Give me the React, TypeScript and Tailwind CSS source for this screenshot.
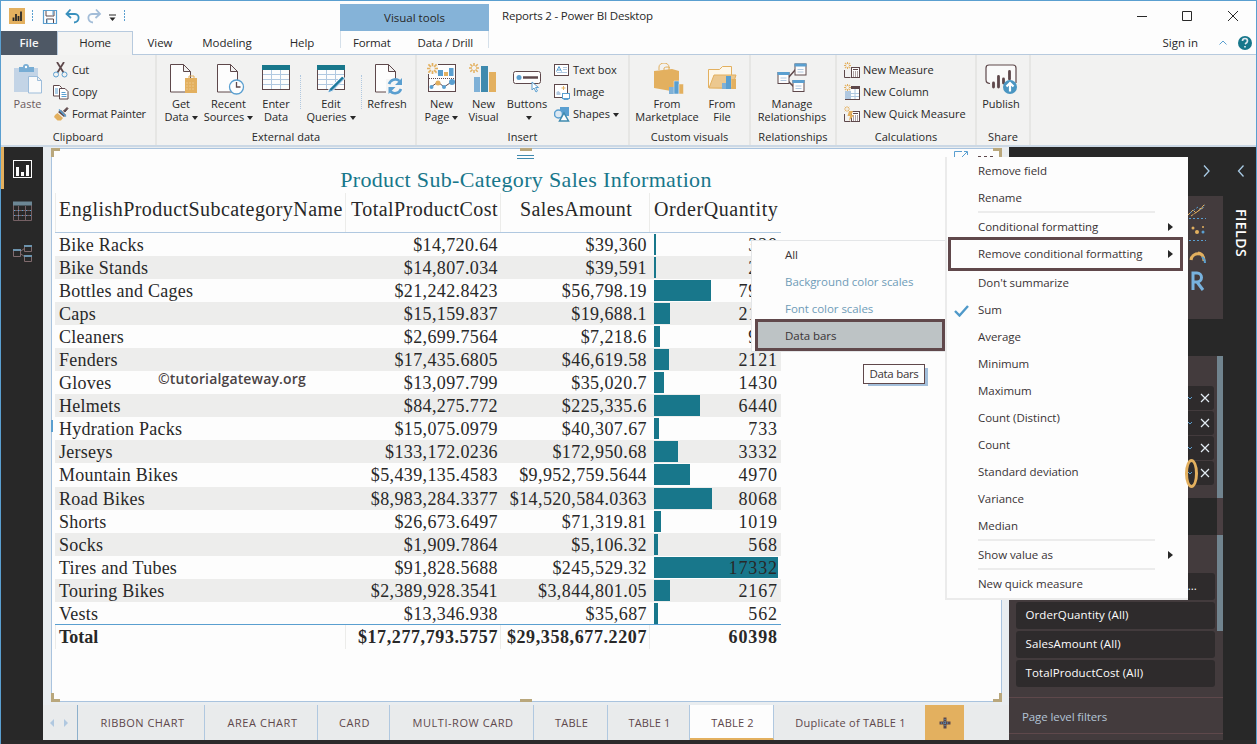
import React from "react";

type Kids = { children?: React.ReactNode };

const B = "#5a9fd0";
const LB = "#b0c8e0";
const G = "#e3b05f";
const D = "#5e484b";
const T = "#18778b";

function Caret() {
  return <span className="ml-[3px] inline-block border-x-[3.5px] border-t-[4px] border-x-transparent border-t-[#282828] align-middle" />;
}

function Big({ icon, a, b, w, caret, dim }: { icon: React.ReactNode; a: string; b?: string; w: string; caret?: boolean; dim?: boolean }) {
  return (
    <div className={`flex flex-col items-center shrink-0 ${w} pt-[8px]`}>
      <svg width="36" height="34" viewBox="0 0 36 34" fill="none" shapeRendering="geometricPrecision">{icon}</svg>
      <div className={`text-center text-[11px] leading-[13px] whitespace-nowrap ${dim ? "text-[#6a5a5c]" : ""}`}>
        <div>{a}</div>
        <div className="h-[13px]">{b}{caret && <Caret />}</div>
      </div>
    </div>
  );
}

function Small({ icon, text, caret }: { icon: React.ReactNode; text: string; caret?: boolean }) {
  return (
    <div className="flex h-[22px] items-center gap-[3px] text-[11px] whitespace-nowrap">
      <svg width="16" height="16" viewBox="0 0 16 16" fill="none">{icon}</svg>
      <span>{text}{caret && <Caret />}</span>
    </div>
  );
}

function Group({ w, label, children }: Kids & { w: string; label: string }) {
  return (
    <div className={`flex shrink-0 flex-col border-r-2 border-[#e6e6e4] ${w}`}>
      <div className="flex h-[74px]">{children}</div>
      <div className="text-center text-[11px] leading-[16px] tracking-[0.05px]">{label}</div>
    </div>
  );
}

function Page() {
  return <path d="M6.500 1.500h13l7 7v20.500h-20zM19.500 1.500v7h7" fill="#fdfdfd" stroke={D} />;
}

function Spark({ x = 0, y = 0, s = 1 }: { x?: number; y?: number; s?: number }) {
  return (
    <g transform={`translate(${x} ${y}) scale(${s})`} stroke={G} strokeWidth="1.5">
      <path d="M5 0v3M5 7v3M0 5h3M7 5h3M1.300 1.300l2.200 2.200M6.500 6.500l2.200 2.200M8.700 1.300L6.500 3.500M3.500 6.500L1.300 8.700" />
    </g>
  );
}

const calc = (
  <>
    <rect x="7.500" y="5.500" width="8" height="10" fill="#fdfdfd" stroke={D} />
    <path d="M9 7.500h5M9 10h1m1 0h1m1 0h1M9 12h1m1 0h1m1 0h1M9 14h1m1 0h1m1 0h1" stroke={D} />
    <path d="M.5 8v7.500h6" stroke={D} />
  </>
);

function Ribbon() {
  return (
    <div className="flex h-[92px] shrink-0 border-b-2 border-[#cbd8e5] bg-[#f2f2f1] text-[#282828]">
      <Group w="w-[156px]" label="Clipboard">
        <Big w="w-[53px]" a="Paste" dim icon={<>
          <path d="M4 5h24v24H4z" fill="#c3d4e6" /><path d="M9 4h4a3 3 0 0 1 6 0h5v5H9z" fill="#78add4" /><circle cx="16" cy="4" r="1.200" fill="#fff" />
          <path d="M18.500 13.500h9l4 4v12.500h-13zM27.500 13.500v4h4" fill="#fafafa" stroke="#9dbddb" />
        </>} />
        <div className="-ml-px flex flex-col pt-1 tracking-[-0.2px]">
          <Small text="Cut" icon={<>
            <path d="M4 0l6.500 10.500M11 0L4.500 10.500" stroke={D} strokeWidth="1.800" /><circle cx="3" cy="12.500" r="2.500" stroke={B} /><circle cx="11.500" cy="12.500" r="2.500" stroke={B} />
          </>} />
          <Small text="Copy" icon={<>
            <path d="M.5 1.500h6l2 2v8.500h-8z" fill="#fff" stroke={D} /><path d="M6.500 4.500h5.500l3 3v7.500h-8.500z" fill="#fff" stroke={D} /><path d="M2 5h3M2 7h3M2 9h3M8.500 8.500h4M8.500 10.500h5M8.500 12.500h5" stroke={B} />
          </>} />
          <Small text="Format Painter" icon={<>
            <path d="M10.500 5L14 1.500l1 1L12 6z" fill={D} stroke={D} /><path d="M5 6l3-2 5 5-2 2z" fill={D} /><path d="M6 3.500l7 7" stroke={B} strokeWidth="1.500" /><path d="M4.500 7l5.500 5-2 2.500H4.500L1 11l1-2z" fill={G} />
          </>} />
        </div>
      </Group>
      <Group w="w-[260px]" label="External data">
        <Big w="w-[48px]" a="Get" b="Data" caret icon={<g transform="translate(1 0)"><Page /><rect x="21" y="15" width="12" height="15" fill={G} /><path d="M25 15v-2h5v2M21 17.500h12" stroke={G} /><path d="M22.500 20h9M22.500 23h9M22.500 26h9" stroke="#f5ddb5" strokeDasharray="1 2" /></g>} />
        <Big w="w-[47px]" a="Recent" b="Sources" caret icon={<><Page /><circle cx="25.500" cy="24" r="7" fill="#fdfdfd" stroke={B} strokeWidth="1.300" /><path d="M25.500 19v5h4" stroke={D} strokeWidth="1.300" /></>} />
        <Big w="w-[48px]" a="Enter" b="Data" icon={<>
          <rect x="4.500" y="2.500" width="27" height="24" fill="#fdfdfd" stroke={D} /><rect x="4" y="2" width="28" height="5" fill={T} /><path d="M5 11.500h26M5 16.500h26M5 21.500h26M13.500 7v19M22.500 7v19" stroke={LB} />
        </>} />
        <div className="my-5 border-l border-dotted border-[#b0c8e0]" />
        <Big w="w-[60px]" a="Edit" b="Queries" caret icon={<>
          <rect x="4.500" y="2.500" width="27" height="24" fill="#fdfdfd" stroke={D} /><rect x="4" y="2" width="28" height="5" fill={T} /><path d="M5 11.500h26M5 16.500h26M5 21.500h26M13.500 7v19M22.500 7v19" stroke={LB} />
          <path d="M16 26L29 13l3 2.500L19 28.500l-4.500 1.500z" fill={B} stroke="#f5f5f5" /><path d="M17.500 27L30 14.500" stroke={T} strokeWidth="1.500" />
        </>} />
        <div className="my-5 border-l border-dotted border-[#b0c8e0]" />
        <Big w="w-[50px]" a="Refresh" icon={<><Page /><path d="M17 16h17v14H17z" fill="#f5f5f5" /><path d="M20 21a6.500 6.500 0 0 1 10.500-3M32 26a6.500 6.500 0 0 1-10.500 2.500" stroke={B} strokeWidth="2.600" /><path d="M33 15v7h-7zM19.500 31v-7h7z" fill={B} /></>} />
      </Group>
      <Group w="w-[213px]" label="Insert">
        <Big w="w-[49px]" a="New" b="Page" caret icon={<>
          <rect x="4.500" y="1.500" width="27" height="27" fill="#fdfdfd" stroke={D} /><path d="M5 15.500h26" stroke={D} strokeDasharray="1 1" /><path d="M14 7h5v6h-5zM25 5h4.500v8H25z" fill={B} /><path d="M20 9h4v4h-4z" fill={G} />
          <path d="M7 24l7-5 6 5 9-6" stroke={D} /><circle cx="7.500" cy="24" r="2" fill={B} /><circle cx="14" cy="20" r="2.500" fill={G} /><circle cx="20" cy="24" r="2" fill={B} /><circle cx="28" cy="19" r="3" fill={B} />
          <path d="M3 0h11v11H3z" fill="#f2f2f1" /><Spark x={3} y={0} s={1.100} />
        </>} />
        <Big w="w-[35px]" a="New" b="Visual" icon={<><Spark x={3} y={0} /><path d="M8 14h6v15H8z" fill="#7fb1d7" /><path d="M15 3h7v26h-7z" fill="#3f8aae" /><path d="M23 9h7v20h-7z" fill={G} /></>} />
        <Big w="w-[52px]" a="Buttons" caret icon={<><rect x="4.500" y="8.500" width="27" height="12" rx="2" fill="#fdfdfd" stroke={D} /><circle cx="10" cy="14.500" r="2.500" fill={B} /><path d="M14 14.500h15" stroke={D} strokeWidth="2.500" /><path d="M23 19v8l2-2 2 4 1.500-1-2-3.500h3z" fill="#fff" stroke={B} /></>} />
        <div className="ml-px flex flex-col pt-1">
          <Small text="Text box" icon={<><rect x=".5" y="2.500" width="14" height="11" fill="#fff" stroke={D} /><path d="M2.500 9.500L5 4.500l2.500 5M3.500 8h3" stroke={B} /><path d="M9 5.500h4M9 7.500h4M3 10.500h10" stroke={LB} /></>} />
          <Small text="Image" icon={<><rect x=".5" y=".5" width="13" height="13" fill="#fff" stroke={D} /><path d="M9.500 2v4M7.500 4h4" stroke={G} /><path d="M2.500 11V8l2-1 2 2v2z" fill={LB} /><rect x="8.500" y="9.500" width="7" height="5" fill="#fff" stroke={B} /><path d="M12 14v2M9.500 15.500h5" stroke={B} /></>} />
          <Small text="Shapes" caret icon={<><path d="M6 1h9v9H6z" fill={B} /><circle cx="4.500" cy="8" r="4" stroke={B} strokeWidth="1.500" fill="#dce8f2" /><path d="M10 7l4.500 8h-9z" fill="#fdfdfd" stroke="#3f8aae" strokeWidth="1.500" /></>} />
        </div>
      </Group>
      <Group w="w-[121px]" label="Custom visuals">
        <Big w="w-[74px]" a="From" b="Marketplace" icon={<><path d="M10 7V4a5 4 0 0 1 10 0v3M15 7V5a4 3 0 0 1 6 0" stroke={G} /><path d="M5 8l18-2 7 2v17l-8 3L5 25z" fill={G} /><path d="M20 24h5v7h-5z" fill="#7fb1d7" /><path d="M25 18h5v13h-5z" fill={B} stroke="#f2f2f1" strokeWidth=".5" /><path d="M30 21h4.500v10H30z" fill={G} stroke="#f2f2f1" strokeWidth=".5" /></>} />
        <Big w="w-[36px]" a="From" b="File" icon={<><path d="M4.500 24.500v-18h11l3-3h9v22z" fill="#fdf7ea" stroke={G} /><path d="M10 12h22l-4 13H5z" fill="#ecc88f" stroke={G} /><path d="M18 20h4v6h-4z" fill="#7fb1d7" /><path d="M22 13h5v13h-5z" fill={B} /><path d="M27.500 16H32v10h-4.500z" fill={G} /></>} />
      </Group>
      <Group w="w-[86px]" label="Relationships">
        <Big w="w-[82px]" a="Manage" b="Relationships" icon={<>
          <path d="M14 15L22 6M14 18l6 6" stroke={D} strokeWidth="1.500" />
          {[[21, 1], [4, 9.500], [19, 17.500]].map(([x, y]) => <g key={x}><rect x={x} y={y} width="11" height="11" fill="#fdfdfd" stroke={D} /><rect x={x - .5} y={y - .5} width="12" height="3" fill={B} /><path d={`M${x + 2.500} ${y + 5.500}h6M${x + 2.500} ${y + 8}h6`} stroke={LB} /></g>)}
        </>} />
      </Group>
      <Group w="w-[140px]" label="Calculations">
        <div className="flex flex-col pt-1 pl-[7px]">
          <Small text="New Measure" icon={<>{calc}<Spark s={.7} /></>} />
          <Small text="New Column" icon={<><rect x="1.500" y="2.500" width="14" height="13" fill="#fff" stroke={D} /><path d="M7 2h9v3H7z" fill={D} /><path d="M1 6h5v9H1z" fill={LB} /><path d="M6.500 5v10M11 5v10M2 9.500h13M2 12.500h13" stroke={LB} /><path d="M0 0h7v7H0z" fill="#f2f2f1" /><Spark s={.7} /></>} />
          <Small text="New Quick Measure" icon={<>{calc}<Spark s={.6} /><path d="M5 5h4L7.500 9H10l-5 6 1-5H3.500z" fill={G} /></>} />
        </div>
      </Group>
      <Group w="w-[54px]" label="Share">
        <Big w="w-[48px]" a="Publish" icon={<><path d="M7 20.500q-4 0-4-4V5q0-3 3-3h24q3 0 3 3v15" fill="#fafafa" stroke={D} strokeWidth="1.200" /><path d="M10.500 24v-4M15.500 24V13.500M20.500 20v-4M26.500 16v-7.500" stroke={D} strokeWidth="2.800" strokeLinecap="round" /><circle cx="27" cy="24" r="7" fill="#4a96c2" /><path d="M27 28.500V21M23.500 23.500L27 20l3.500 3.500" stroke="#fff" strokeWidth="2.200" /></>} />
      </Group>
    </div>
  );
}

function Header() {
  return (
    <div className="flex h-[54px] shrink-0 bg-[#fdfdfd] text-[11.5px] text-[#282828]">
      <div className="flex w-[339px] flex-col">
        <div className="flex h-[30px] items-center">
          <svg className="ml-[8px]" width="120" height="18" viewBox="0 0 120 18" fill="none">
            <path d="M0 1h16v16H0z" fill={G} /><path d="M4.500 14v-3.500M7 14V7M9.500 14V9M12 14V4.500" stroke="#282828" strokeWidth="1.800" />
            <path d="M23.500 3v12M115.500 3v12" stroke={B} strokeDasharray="2 1" />
            <path d="M34.500 3.500h13v13h-13z" stroke={B} strokeWidth="1.200" /><path d="M37 4v5h8V4M37.500 16v-4h7v4" stroke={D} /><path d="M38 12v4M44 4v4" stroke={B} />
            <path d="M61.500 2.500L57.500 7l4.500 4M58 7h8c5 0 5 8-1 8.500" stroke="#3990bd" strokeWidth="1.800" />
            <path d="M87 2.500L91 7l-4.500 4M91 7h-8c-5 0-5 8 1 8.500" stroke="#a3bdd8" strokeWidth="1.800" />
            <path d="M100 8h7" stroke="#282828" /><path d="M100.500 10.500h6l-3 3.500z" fill="#282828" />
          </svg>
        </div>
        <div className="flex h-[24px] items-stretch">
          <div className="flex w-[56px] items-center justify-center bg-[#4e5865] font-semibold text-[#f5f5f5]">File</div>
          <div className="flex w-[76px] items-center justify-center border border-b-0 border-[#b7cade] bg-[#f4f4f3] pb-px tracking-[-0.2px]">Home</div>
          <div className="flex w-[207px] items-center border-b border-[#b7cade] tracking-[-0.05px]">
            <span className="w-[54px] text-center">View</span><span className="w-[80px] text-center">Modeling</span><span className="w-[70px] text-center">Help</span>
          </div>
        </div>
      </div>
      <div className="flex w-[149px] flex-col border-b border-[#b7cade] pt-[3px]">
        <div className="flex h-[27px] items-center justify-center bg-[#85b3d8]">Visual tools</div>
        <div className="flex h-[17px] items-center border-x border-[#d5e0ea] pt-[7px] tracking-[-0.15px]">
          <span className="w-[62px] text-center">Format</span><span className="w-[86px] text-center">Data / Drill</span>
        </div>
      </div>
      <div className="flex flex-1 flex-col border-b border-[#b7cade]">
        <div className="flex h-[30px] items-center pl-[13px]">
          <span className="flex-1 tracking-[-0.18px]">Reports 2 - Power BI Desktop</span>
          <svg className="mr-px" width="120" height="16" viewBox="0 0 120 16" fill="none" stroke="#282828"><path d="M2 8.500h10M47.500 3.500h9v9h-9zM93 3l10 10M103 3L93 13" /></svg>
        </div>
        <div className="flex h-[23px] items-center justify-end pr-[4px]">
          <span>Sign in</span>
          <svg className="ml-[20px]" width="34" height="16" viewBox="0 0 34 16" fill="none"><path d="M1.500 9.500L5 6l3.500 3.500" stroke={B} /><circle cx="27" cy="8" r="7" fill={T} /><path d="M24.500 6q0-2.500 2.500-2.500T29.500 6q0 1.500-2.500 3M27 11v1.500" stroke="#dfe8f0" strokeWidth="1.700" /></svg>
        </div>
      </div>
    </div>
  );
}

const rows: [string, string, string, number][] = [
  ["Bike Racks", "$14,720.64", "$39,360", 328],
  ["Bike Stands", "$14,807.034", "$39,591", 249],
  ["Bottles and Cages", "$21,242.8423", "$56,798.19", 7981],
  ["Caps", "$15,159.837", "$19,688.1", 2190],
  ["Cleaners", "$2,699.7564", "$7,218.6", 908],
  ["Fenders", "$17,435.6805", "$46,619.58", 2121],
  ["Gloves", "$13,097.799", "$35,020.7", 1430],
  ["Helmets", "$84,275.772", "$225,335.6", 6440],
  ["Hydration Packs", "$15,075.0979", "$40,307.67", 733],
  ["Jerseys", "$133,172.0236", "$172,950.68", 3332],
  ["Mountain Bikes", "$5,439,135.4583", "$9,952,759.5644", 4970],
  ["Road Bikes", "$8,983,284.3377", "$14,520,584.0363", 8068],
  ["Shorts", "$26,673.6497", "$71,319.81", 1019],
  ["Socks", "$1,909.7864", "$5,106.32", 568],
  ["Tires and Tubes", "$91,828.5688", "$245,529.32", 17332],
  ["Touring Bikes", "$2,389,928.3541", "$3,844,801.05", 2167],
  ["Vests", "$13,346.938", "$35,687", 562],
];

const cols = "grid grid-cols-[291px_155px_149px_131px]";

function Corner({ c }: { c: string }) {
  return <div className={`absolute size-[9px] border-[#b9a77c] ${c}`} />;
}

function Canvas() {
  return (
    <div className="flex w-[966px] flex-col bg-[#e9edf0] pt-px pl-[8px]">
      <div className="relative h-[554px] w-[951px] shrink-0 border border-[#a9c3de] bg-[#fdfdfd] pl-[3px] text-[#282828]">
        <Corner c="-left-px -top-px border-l-3 border-t-3" />
        <Corner c="-right-px -top-px border-r-3 border-t-3" />
        <Corner c="-left-px -bottom-px border-l-3 border-b-3" />
        <Corner c="-right-px -bottom-px border-r-3 border-b-3" />
        <div className="absolute -top-px left-[468px] h-[3px] w-[12px] bg-[#b9a77c]" />
        <div className="absolute -bottom-px left-[468px] h-[3px] w-[12px] bg-[#b9a77c]" />
        <div className="absolute top-[6px] left-[465px] h-[4px] w-[17px] border-y border-[#3f8aae]" />
        <div className="absolute top-[271px] -left-px h-[12px] w-[2px] bg-[#5a9fd0]" />
        <svg className="absolute top-[2px] left-[901px]" width="46" height="9" viewBox="0 0 46 9" fill="none" stroke={B}><path d="M9 .5H1.500V9M11 .5h3.500V4M14 1L9 6" /><path d="M25 5.500h3m3 0h3m3 0h3" stroke={D} /></svg>
        <div className="h-[44px] w-[942px] pt-[18px] text-center font-['Liberation_Serif',serif] text-[22px] leading-[26px] tracking-[0.34px] text-[#18778b]">Product Sub-Category Sales Information</div>
        <div className="w-[726px] font-['Liberation_Serif',serif] text-[18px]">
          <div className={`${cols} h-[40px] border-b border-[#b0c8e0] text-[20px] leading-[32px] whitespace-nowrap`}>
            <div className="border-x border-[#ececea] pl-[3px] tracking-[0.44px]">EnglishProductSubcategoryName</div>
            <div className="border-r border-[#ececea] pl-[5px] tracking-[0.45px]">TotalProductCost</div>
            <div className="border-r border-[#ececea] pl-[19px] tracking-[0.4px]">SalesAmount</div>
            <div className="pl-[4px] tracking-[0.6px]">OrderQuantity</div>
          </div>
          {rows.map(([name, cost, sales, qty], i) => (
            <div key={name} className={`${cols} h-[23.06px] leading-[24px] ${i % 2 ? "bg-[#ededec]" : ""}`}>
              <div className="pl-[4px] tracking-[0.25px]">{name}</div>
              <div className="pr-[3px] text-right tracking-[0.38px]">{cost}</div>
              <div className="pr-[3px] text-right tracking-[0.42px]">{sales}</div>
              <div className="flex items-start pl-[4px]">
                <div className="mt-px h-[21px] shrink-0 bg-[#18778b]" style={{ width: Math.max(2, (qty / 17332) * 124) }} />
                <div className="w-0 flex-1" />
                <div className="-ml-[60px] w-[60px] shrink-0 pr-[3px] text-right tracking-[0.9px]">{qty}</div>
              </div>
            </div>
          ))}
          <div className={`${cols} relative -mt-px h-[23px] border-t border-[#5a9fd0] font-bold leading-[24px]`}>
            <div className="border-x border-[#ececea] pl-[3px]">Total</div>
            <div className="border-r border-[#ececea] pr-[2px] text-right tracking-[0.6px]">$17,277,793.5757</div>
            <div className="border-r border-[#ececea] pr-[2px] text-right tracking-[0.6px]">$29,358,677.2207</div>
            <div className="pr-[3px] text-right tracking-[0.9px]">60398</div>
          </div>
        </div>
        <div className="absolute top-[221px] left-[106px] text-[14px] font-semibold leading-[18px] tracking-[0.15px] text-[#4a4244]">©tutorialgateway.org</div>
      </div>
      <div className="-ml-[8px] mt-[3px] flex h-[35px] shrink-0 bg-[#e9ebec] text-[11px] leading-[35px] whitespace-nowrap text-[#5e484b]">
        <div className="flex w-[35px] items-center gap-[10px] border-r border-[#8db0cc] pl-[7px]">
          <span className="border-y-[4px] border-r-[4px] border-y-transparent border-r-[#b0c8e0]" />
          <span className="border-y-[4px] border-l-[4px] border-y-transparent border-l-[#b0c8e0]" />
        </div>
        <Tab w="w-[127px] pl-[3px] tracking-[0.45px]">RIBBON CHART</Tab>
        <Tab w="w-[113px] pl-[3px] tracking-[0.55px]">AREA CHART</Tab>
        <Tab w="w-[72px] pl-[2px] tracking-[0.6px]">CARD</Tab>
        <Tab w="w-[144px] pl-[3px] tracking-[0.55px]">MULTI-ROW CARD</Tab>
        <Tab w="w-[74px] pl-[2px] tracking-[0.2px]">TABLE</Tab>
        <Tab w="w-[82px] pl-[2px] tracking-[0.1px]">TABLE 1</Tab>
        <div className="w-[84px] border-r border-b-2 border-r-[#b0c8e0] border-b-[#e3b05f] bg-[#fdfdfd] pl-[2px] text-center tracking-[0.2px]">TABLE 2</div>
        <div className="w-[151px] pl-[2px] text-center tracking-[0.25px]">Duplicate of TABLE 1</div>
        <div className="flex w-[39px] items-center justify-center bg-[#e3b05f]">
          <svg width="12" height="12" viewBox="0 0 12 12"><path d="M4.500 0.500h3v4h4v3h-4v4h-3v-4h-4v-3h4z" fill="#5e484b" /><path d="M6 2v8M2 6h8" stroke={B} strokeDasharray="1 1" /></svg>
        </div>
      </div>
    </div>
  );
}

function Tab({ w, children }: Kids & { w: string }) {
  return <div className={`${w} shrink-0 border-r border-[#b0c8e0] text-center`}>{children}</div>;
}

function LeftNav() {
  return (
    <div className="w-[42px] bg-[#282828]">
      <div className="h-[42px] border-l-[3px] border-[#e3b05f] pt-[13px] pl-[9px]">
        <svg width="19" height="18" viewBox="0 0 19 18" fill="none"><rect x=".5" y=".5" width="18" height="17" stroke="#fdfdfd" /><path d="M4.500 16V7M9.500 16v-4M14.500 16V5" stroke="#fdfdfd" strokeWidth="3" /></svg>
      </div>
      <div className="pt-[12px] pl-[12px]">
        <svg width="19" height="20" viewBox="0 0 19 20" fill="none"><path d="M.5 1v18.500h18V1M1 9.500h17M1 14.500h17M5.500 5v14M12.500 5v14" stroke="#756064" /><path d="M0 2.500h19" stroke="#6c8795" strokeWidth="4" /><path d="M1 9.500h17M1 14.500h17" stroke={B} strokeDasharray="1 3" /></svg>
      </div>
      <div className="pt-[22px] pl-[12px]">
        <svg width="19" height="20" viewBox="0 0 19 20" fill="none"><path d="M8 8l4-3M8 11l4 3M.5 6.500h7v7h-7zM11.500 2.500h7v6h-7zM11.500 12.500h7v6h-7z" stroke="#806b6e" /><path d="M0 7h8M11 3h8M11 13h8" stroke="#6c93ad" strokeWidth="2" /></svg>
      </div>
    </div>
  );
}

function Well() {
  return (
    <div className="ml-[7px] mr-[9px] mb-px flex h-[24px] items-center justify-end rounded-[3px] bg-[#2e2b2c] pr-[3px]">
      <svg width="24" height="12" viewBox="0 0 24 12" fill="none"><path d="M1 5l2 2 2-2" stroke={B} /><path d="M14 2l8 8M22 2l-8 8" stroke="#e4edf5" strokeWidth="1.200" /></svg>
    </div>
  );
}

function Filter({ children }: Kids) {
  return <div className="ml-[7px] mr-[8px] mb-[2px] h-[27px] rounded-[3px] bg-[#2e2b2c] pl-[9.5px] leading-[25px] tracking-[0.1px]">{children}</div>;
}

function Side() {
  return (
    <div className="flex w-[247px] bg-[#282828]">
      <div className="relative flex w-[214px] flex-col text-[11.5px] text-[#fdfdfd]">
        <div className="flex h-[49px] shrink-0 justify-end pt-[17px] pr-[13px]">
          <svg width="7" height="14" viewBox="0 0 7 14" fill="none"><path d="M1 1.500L6 7l-5 5.500" stroke="#a9cbe5" strokeWidth="1.300" /></svg>
        </div>
        <div className="flex h-[123px] shrink-0 justify-end bg-[#433b3d] pt-[6px] pr-[16px]">
          <svg width="19" height="92" viewBox="0 0 19 92" fill="none">
            <path d="M0 13l5-5 3 3 9-9M3 14L16 5" stroke={G} strokeDasharray="3 1" /><path d="M2 11l8-6 3 3 4-5M1 16.500h17" stroke={B} strokeDasharray="2 2" />
            <circle cx="9" cy="30" r="2" fill={G} /><circle cx="15" cy="30" r="1.500" fill={B} /><circle cx="5" cy="26" r="1.500" fill={G} /><circle cx="15" cy="25" r="1" fill={G} /><path d="M1 38.500h17" stroke={B} strokeDasharray="2 2" />
            <path d="M3 58a7 7 0 0 1 9-6" stroke={G} strokeWidth="3" /><path d="M10 51q6 1 6 8" stroke={G} strokeWidth="3" /><path d="M14 55q3 2 3 6" stroke={B} strokeWidth="2" />
            <path d="M5 88V71h4a4.500 4.500 0 0 1 0 9H5M9 80l6 8" stroke="#78b2de" strokeWidth="3" />
          </svg>
        </div>
        <div className="h-[37px] shrink-0" />
        <div className="h-[142px] shrink-0 bg-[#433b3d] pt-[30px]"><Well /><Well /><Well /><Well /></div>
        <div className="h-[37px] shrink-0" />
        <div className="flex-1 bg-[#433b3d] pt-[38px]">
          <Filter><div className="pr-[18px] text-right">...</div></Filter>
          <Filter>OrderQuantity (All)</Filter>
          <Filter>SalesAmount (All)</Filter>
          <Filter>TotalProductCost (All)</Filter>
          <div className="mt-[10px] h-[37px] border-y border-[#5e484b] pl-[13px] leading-[38px] tracking-[-0.1px] text-[#b3c4d6]">Page level filters</div>
        </div>
        <div className="absolute top-[209px] right-0 h-[142px] w-[6px] bg-[#71848f]" />
        <div className="absolute top-[351px] right-0 h-[37px] w-[6px] bg-[#4a3f42]" />
        <div className="absolute top-[388px] right-0 h-[96px] w-[6px] bg-[#71848f]" />
      </div>
      <div className="flex flex-1 flex-col items-center pt-[17px] pl-[2px]">
        <svg width="8" height="14" viewBox="0 0 8 14" fill="none"><path d="M6.500 1.500L1.500 7l5 5.500" stroke="#a9cbe5" strokeWidth="1.300" /></svg>
        <div className="mt-[31px] text-[14px] leading-[14px] font-semibold tracking-[0.5px] text-[#fdfdfd] [writing-mode:vertical-rl]">FIELDS</div>
      </div>
    </div>
  );
}

function Item({ children, arrow, check, extra }: Kids & { arrow?: boolean; check?: boolean; extra?: string }) {
  return (
    <div className={`flex h-[27px] items-center ${extra ?? ""}`}>
      <div className="w-[32px] pl-[8px]">
        {check && <svg className="mt-[3px]" width="15" height="12" viewBox="0 0 15 12" fill="none"><path d="M1 6l4.500 4.500L14 1" stroke="#4f99c9" strokeWidth="2.400" /></svg>}
      </div>
      <span className="flex-1">{children}</span>
      {arrow && <span className="mr-[15px] border-y-[4px] border-l-[5px] border-y-transparent border-l-[#282828]" />}
    </div>
  );
}

const Sep = () => <div className="mr-[33px] ml-[32px] h-[2px] bg-[#ececec]" />;

function Menus() {
  return (
    <div className="text-[11.5px] tracking-[-0.05px] whitespace-nowrap text-[#3a3436]">
      <div className="absolute top-[240px] left-[751px] h-[112px] w-[195px] border border-[#e4e6e8] bg-[#fdfdfd]">
        <div className="flex h-[27px] items-center pl-[33px]">All</div>
        <div className="flex h-[27px] items-center pl-[33px] text-[#6f9cb8]">Background color scales</div>
        <div className="flex h-[27px] items-center pl-[33px] text-[#6f9cb8]">Font color scales</div>
      </div>
      <div className="absolute top-[319px] left-[755px] flex h-[32px] w-[190px] items-center border-3 border-[#60484b] bg-[#bdc3c5] pt-[2px] pl-[27px]">Data bars</div>
      <div className="absolute top-[157px] left-[945px] h-[443px] w-[243px] border-b-2 border-l-2 border-[#ebebeb] bg-[#fdfdfd]">
        <div className="-ml-px">
          <Item>Remove field</Item>
          <Item>Rename</Item>
          <Sep />
          <Item arrow>Conditional formatting</Item>
          <Item arrow>Remove conditional formatting</Item>
          <Item extra="mt-[2px]">Don't summarize</Item>
          <Item check>Sum</Item>
          <Item>Average</Item>
          <Item>Minimum</Item>
          <Item>Maximum</Item>
          <Item>Count (Distinct)</Item>
          <Item>Count</Item>
          <Item>Standard deviation</Item>
          <Item>Variance</Item>
          <Item>Median</Item>
          <Sep />
          <Item arrow>Show value as</Item>
          <Sep />
          <Item>New quick measure</Item>
        </div>
      </div>
      <div className="absolute top-[237px] left-[948px] h-[34px] w-[235px] border-3 border-[#60484b]" />
      <div className="absolute top-[364px] left-[863px] flex h-[20px] w-[62px] items-center justify-center border border-[#60484b] bg-[#fdfdfd] tracking-[-0.3px] shadow-[4px_3px_0_-1px_#a3bfdb]">Data bars</div>
      <div className="absolute top-[459px] left-[1185px] h-[29px] w-[13px] rounded-[50%] border-3 border-[#e3b05f]" />
    </div>
  );
}

export default function App() {
  return (
    <div className="relative flex h-[744px] w-[1257px] flex-col overflow-hidden border-x border-t border-[#5a9fd0] bg-[#2c292a] font-['Open_Sans',sans-serif]">
      <Header />
      <Ribbon />
      <div className="flex h-[593px] shrink-0">
        <LeftNav />
        <Canvas />
        <Side />
      </div>
      <div className="absolute -top-px -left-px"><Menus /></div>
    </div>
  );
}
